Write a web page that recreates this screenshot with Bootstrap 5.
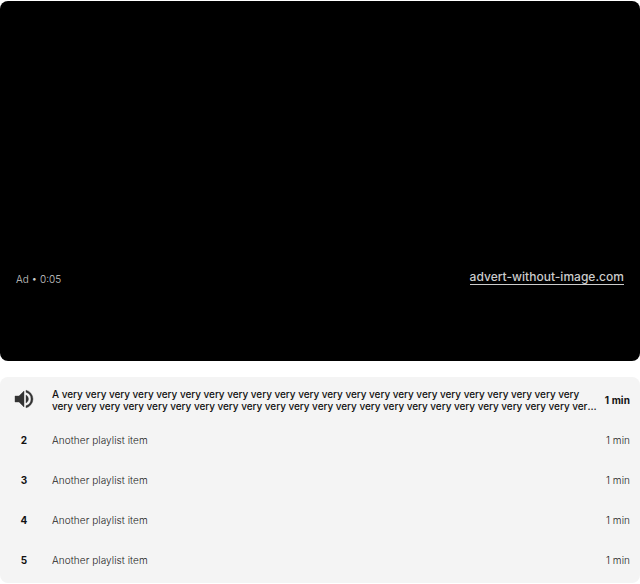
<!DOCTYPE html>
<html lang="en">
<head>
<meta charset="utf-8">
<meta name="viewport" content="width=device-width, initial-scale=1">
<title>Playlist player</title>
<link href="https://cdn.jsdelivr.net/npm/bootstrap@5.3.0/dist/css/bootstrap.min.css" rel="stylesheet">
<style>
body{font-family:Inter,sans-serif;font-size:10px;font-weight:300;line-height:12px;color:#111;background:#fff;overflow:hidden}
.player{height:360px;margin-top:1px;border-radius:8px;padding:0 16px 76px}
.ad-label{color:#ccc;line-height:12px}
.ad-link{color:#ccc;font-size:12px;font-weight:500;letter-spacing:.02px;line-height:14px;border-bottom:1px solid #ccc}
.playlist{margin-top:16px;background:#f4f4f4;border-radius:8px;height:206px;padding-top:3px}
.track{height:40px;padding-right:10px;color:#222;letter-spacing:.07px}
.track-num{width:48px;color:#111}
.track-icon{position:relative;top:-1px}
.track-title{padding:0 8px 0 4px}
.current{color:#111}
.current .track-title{font-weight:500;letter-spacing:-.045px;display:-webkit-box;-webkit-line-clamp:2;-webkit-box-orient:vertical;overflow:hidden}
.current-time{letter-spacing:.1px}
</style>
</head>
<body>
<section class="player bg-black d-flex justify-content-between align-items-end">
<span class="ad-label">Ad • 0:05</span>
<a class="ad-link text-decoration-none" href="#">advert-without-image.com</a>
</section>
<section class="playlist">
<div class="track current d-flex align-items-center">
<div class="track-num flex-shrink-0 text-center"><svg class="track-icon" width="24" height="24" viewBox="0 0 24 24" fill="#333"><path d="M3 9v6h4l5 5V4L7 9H3zm13.500 3A4.500 4.500 0 0 0 14 7.970v8.050A4.470 4.470 0 0 0 16.500 12zM14 3.230v2.060a7 7 0 0 1 0 13.420v2.060a9 9 0 0 0 0-17.540z" stroke="#333" stroke-width=".4"/></svg></div>
<div class="track-title flex-grow-1">A very very very very very very very very very very very very very very very very very very very very very very very very very very very very very very very very very very very very very very very very very very very very very very very long title</div>
<div class="current-time flex-shrink-0 fw-bold">1 min</div>
</div>
<div class="track d-flex align-items-center"><div class="track-num text-center fw-bold">2</div><div class="track-title flex-grow-1">Another playlist item</div><div>1 min</div></div>
<div class="track d-flex align-items-center"><div class="track-num text-center fw-bold">3</div><div class="track-title flex-grow-1">Another playlist item</div><div>1 min</div></div>
<div class="track d-flex align-items-center"><div class="track-num text-center fw-bold">4</div><div class="track-title flex-grow-1">Another playlist item</div><div>1 min</div></div>
<div class="track d-flex align-items-center"><div class="track-num text-center fw-bold">5</div><div class="track-title flex-grow-1">Another playlist item</div><div>1 min</div></div>
</section>
<script src="https://cdn.jsdelivr.net/npm/bootstrap@5.3.0/dist/js/bootstrap.bundle.min.js"></script>
</body>
</html>
